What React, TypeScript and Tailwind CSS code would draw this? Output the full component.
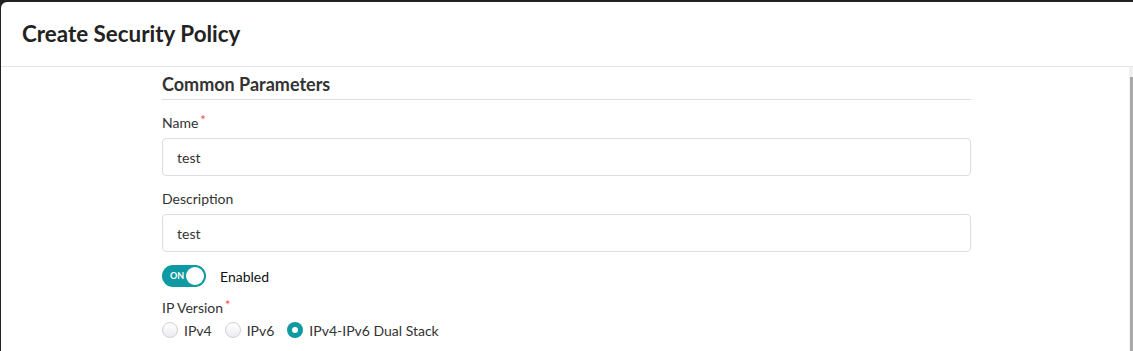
import { useState } from "react";

type IpVersion = "ipv4" | "ipv6" | "dual";

const ipOptions: { value: IpVersion; label: string }[] = [
  { value: "ipv4", label: "IPv4" },
  { value: "ipv6", label: "IPv6" },
  { value: "dual", label: "IPv4-IPv6 Dual Stack" },
];

function Label({ text, required }: { text: string; required?: boolean }) {
  return (
    <div className="flex items-start text-[14px] leading-[18px] text-[#333]">
      <span>{text}</span>
      {required && <span className="ml-[2px] text-[13px] leading-[12px] text-[#e5534b]">*</span>}
    </div>
  );
}

function TextField({ value, onChange }: { value: string; onChange: (v: string) => void }) {
  return (
    <input
      value={value}
      onChange={(e) => onChange(e.target.value)}
      className="h-[38px] w-full rounded-[4px] border border-[#dcdce4] px-[14px] text-[14px] text-[#333] outline-none"
    />
  );
}

export default function App() {
  const [name, setName] = useState("test");
  const [description, setDescription] = useState("test");
  const [enabled, setEnabled] = useState(true);
  const [ip, setIp] = useState<IpVersion>("dual");

  return (
    <div className="min-h-screen bg-[#222] pl-[1px] pt-[2px] font-['Lato','Liberation_Sans',sans-serif]">
      <div className="flex h-[349px] flex-col overflow-hidden rounded-tl-[6px] bg-white">
        <header className="flex h-[65px] shrink-0 items-center border-b border-[#e2e2ea] px-[21px]">
          <h1 className="text-[22.4px] font-bold text-[#222]">Create Security Policy</h1>
        </header>

        <div className="flex flex-1">
          <main className="flex-1 pl-[161px]">
            <div className="w-[809px]">
              <h2 className="mt-[5px] border-b border-[#dcdce4] pb-[3px] text-[18px] font-bold leading-[24px] text-[#333]">
                Common Parameters
              </h2>

              <div className="mt-[14px]">
                <Label text="Name" required />
                <div className="mt-[6px]">
                  <TextField value={name} onChange={setName} />
                </div>
              </div>

              <div className="mt-[14px]">
                <Label text="Description" />
                <div className="mt-[6px]">
                  <TextField value={description} onChange={setDescription} />
                </div>
              </div>

              <div className="mt-[13px] flex items-center gap-[14px]">
                <button
                  onClick={() => setEnabled((v) => !v)}
                  className={`relative flex h-[22px] w-[44px] items-center rounded-full ${
                    enabled ? "bg-[#0f99a2]" : "bg-[#ccc]"
                  }`}
                >
                  {enabled && (
                    <span className="absolute left-[8px] text-[9px] font-bold text-white">ON</span>
                  )}
                  <span
                    className={`absolute top-[2px] h-[18px] w-[18px] rounded-full bg-white ${
                      enabled ? "right-[2px]" : "left-[2px]"
                    }`}
                  />
                </button>
                <span className="text-[14px] text-[#111]">Enabled</span>
              </div>

              <div className="mt-[12px]">
                <Label text="IP Version" required />
                <div className="mt-[3px] flex h-[20px] items-center gap-[13px]">
                  {ipOptions.map((o) => {
                    const checked = ip === o.value;
                    return (
                      <label key={o.value} className="flex cursor-pointer items-center gap-[6px]" onClick={() => setIp(o.value)}>
                        {checked ? (
                          <span className="flex h-[16px] w-[16px] items-center justify-center rounded-full bg-[#0f99a2]">
                            <span className="h-[6px] w-[6px] rounded-full bg-white" />
                          </span>
                        ) : (
                          <span className="h-[16px] w-[16px] rounded-full border border-[#d0d0d6] bg-gradient-to-b from-white to-[#ececf0]" />
                        )}
                        <span className="text-[14px] text-[#333]">{o.label}</span>
                      </label>
                    );
                  })}
                </div>
              </div>
            </div>
          </main>

          <div className="w-[4px] bg-[#f0f0f0]">
            <div className="ml-auto mt-[10px] h-full w-[3px] bg-[#a9a9a9]" />
          </div>
        </div>
      </div>
    </div>
  );
}
